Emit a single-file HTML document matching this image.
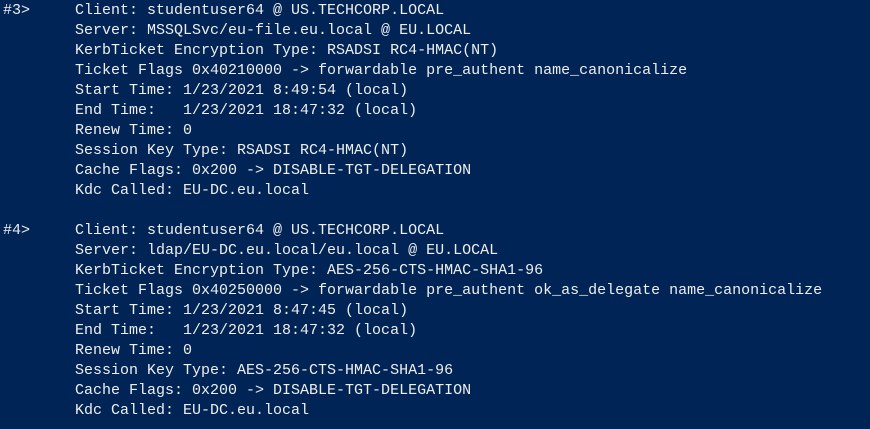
<!DOCTYPE html>
<html><head><meta charset="utf-8"><style>
html,body{margin:0;padding:0;background:#012456;width:870px;height:429px;overflow:hidden}
pre{margin:0;position:absolute;left:3px;top:1px;font-family:"Liberation Mono",monospace;font-size:15px;line-height:20px;color:#eeeeee;white-space:pre}
</style></head><body><pre>#3&gt;     Client: studentuser64 @ US.TECHCORP.LOCAL
        Server: MSSQLSvc/eu-file.eu.local @ EU.LOCAL
        KerbTicket Encryption Type: RSADSI RC4-HMAC(NT)
        Ticket Flags 0x40210000 -&gt; forwardable pre_authent name_canonicalize
        Start Time: 1/23/2021 8:49:54 (local)
        End Time:   1/23/2021 18:47:32 (local)
        Renew Time: 0
        Session Key Type: RSADSI RC4-HMAC(NT)
        Cache Flags: 0x200 -&gt; DISABLE-TGT-DELEGATION
        Kdc Called: EU-DC.eu.local

#4&gt;     Client: studentuser64 @ US.TECHCORP.LOCAL
        Server: ldap/EU-DC.eu.local/eu.local @ EU.LOCAL
        KerbTicket Encryption Type: AES-256-CTS-HMAC-SHA1-96
        Ticket Flags 0x40250000 -&gt; forwardable pre_authent ok_as_delegate name_canonicalize
        Start Time: 1/23/2021 8:47:45 (local)
        End Time:   1/23/2021 18:47:32 (local)
        Renew Time: 0
        Session Key Type: AES-256-CTS-HMAC-SHA1-96
        Cache Flags: 0x200 -&gt; DISABLE-TGT-DELEGATION
        Kdc Called: EU-DC.eu.local</pre></body></html>
